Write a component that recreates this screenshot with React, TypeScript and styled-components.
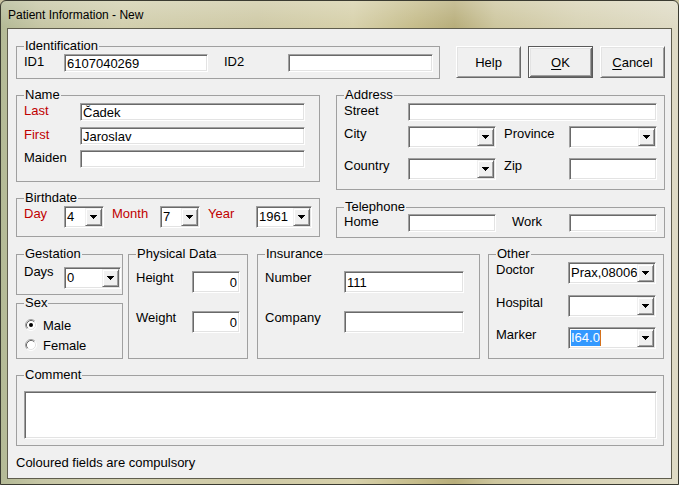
import React from "react";
import styled, { createGlobalStyle } from "styled-components";

const GlobalStyle = createGlobalStyle`
  html, body { margin: 0; padding: 0; background: #c9c3a0; }
  body {
    font-family: "Liberation Sans", Arial, sans-serif;
    font-size: 13px;
    color: #000;
  }
  * { box-sizing: border-box; }
`;

const Window = styled.div`
  width: 679px;
  height: 485px;
  border: 1px solid #3b3b31;
  border-radius: 6px 6px 0 0;
  overflow: hidden;
  background: linear-gradient(180deg, rgba(255, 255, 255, 0.22) 0, rgba(255, 255, 255, 0) 26px),
    linear-gradient(
      90deg,
      #b4ba96 0%,
      #c6c6a5 6%,
      #d2cfae 18%,
      #cfcaa6 38%,
      #d7d1ab 52%,
      #c6bd8c 61%,
      #b8ae7b 67%,
      #cdc69e 73%,
      #d8d3b5 85%,
      #dfdbc5 100%
    );
`;

const TitleBar = styled.div`
  height: 27px;
  padding-left: 7px;
  display: flex;
  align-items: center;
  font-size: 12px;
  color: #000;
`;

const Client = styled.div`
  margin: 0 6px;
  height: 451px;
  border: 1px solid #5f5d4d;
  background: #f0f0f0;
  padding: 10px 0 0 8px;
`;

const Line = styled.div<{ $mt?: number }>`
  display: flex;
  align-items: flex-start;
  margin-top: ${(p) => p.$mt ?? 0}px;
`;

const Column = styled.div<{ $w: number }>`
  display: flex;
  flex-direction: column;
  width: ${(p) => p.$w}px;
`;

const Group = styled.fieldset<{ $w: number; $h: number; $pt?: number; $ml?: number; $mt?: number }>`
  flex: none;
  width: ${(p) => p.$w}px;
  height: ${(p) => p.$h}px;
  min-width: 0;
  margin: ${(p) => p.$mt ?? 0}px 0 0 ${(p) => p.$ml ?? 0}px;
  padding: ${(p) => p.$pt ?? 1}px 0 0 7px;
  border: 1px solid #a0a0a0;
`;

const Legend = styled.legend`
  padding: 0 1px;
  margin: 0;
  line-height: 14px;
  font-size: 13px;
`;

const Row = styled.div<{ $h?: number; $mt?: number }>`
  display: flex;
  align-items: flex-start;
  height: ${(p) => p.$h ?? 22}px;
  margin-top: ${(p) => p.$mt ?? 0}px;
`;

const Label = styled.span<{ $w: number; $ml?: number; $dy?: number; $req?: boolean }>`
  flex: none;
  width: ${(p) => p.$w}px;
  margin-left: ${(p) => p.$ml ?? 0}px;
  margin-top: ${(p) => p.$dy ?? 0}px;
  line-height: 16px;
  white-space: nowrap;
  color: ${(p) => (p.$req ? "#c00000" : "#000")};
`;

const sunken = `
  border: 1px solid;
  border-color: #a0a0a0 #ffffff #ffffff #a0a0a0;
  box-shadow: inset 1px 1px 0 #696969, inset -1px -1px 0 #e3e3e3;
  background: #fff;
`;

const TextBox = styled.input<{ $w: number; $h?: number; $right?: boolean }>`
  flex: none;
  width: ${(p) => p.$w}px;
  height: ${(p) => p.$h ?? 18}px;
  margin: 0;
  padding: 0 ${(p) => (p.$right ? 2 : 0)}px 0 2px;
  ${sunken}
  font: 13px "Liberation Sans", Arial, sans-serif;
  color: #000;
  text-align: ${(p) => (p.$right ? "right" : "left")};
  outline: none;
`;

const Memo = styled.textarea`
  display: block;
  width: 633px;
  height: 48px;
  margin: 0;
  padding: 1px 2px;
  ${sunken}
  font: 13px "Liberation Sans", Arial, sans-serif;
  resize: none;
  outline: none;
`;

const ComboBox = styled.div<{ $w: number }>`
  flex: none;
  display: flex;
  width: ${(p) => p.$w}px;
  height: 22px;
  padding: 1px;
  ${sunken}
`;

const ComboText = styled.span`
  flex: 1;
  min-width: 0;
  overflow: hidden;
  white-space: nowrap;
  padding-left: 1px;
  line-height: 18px;
`;

const Selected = styled.span`
  display: inline-block;
  line-height: 16px;
  margin-top: 1px;
  background: #3399ff;
  color: #fff;
  border-right: 1px solid #d4711c;
`;

const DropButton = styled.span`
  flex: none;
  width: 17px;
  height: 18px;
  display: flex;
  align-items: center;
  justify-content: center;
  border: 1px solid;
  border-color: #f0f0f0 #696969 #696969 #f0f0f0;
  box-shadow: inset 1px 1px 0 #fff, inset -1px -1px 0 #a0a0a0;
  background: #f0f0f0;
`;

const Buttons = styled.div`
  display: flex;
  gap: 7px;
  margin: 7px 0 0 16px;
`;

const Button = styled.button<{ $default?: boolean }>`
  width: 65px;
  height: 32px;
  margin: 0;
  padding: 0;
  font: 13px "Liberation Sans", Arial, sans-serif;
  color: #000;
  background: #f0f0f0;
  border: 1px solid;
  border-color: ${(p) => (p.$default ? "#5a5a5a" : "#fff #696969 #696969 #fff")};
  box-shadow: ${(p) =>
    p.$default
      ? "inset 1px 1px 0 #fff, inset -1px -1px 0 #696969, inset 2px 2px 0 #e3e3e3, inset -2px -2px 0 #a0a0a0"
      : "inset 1px 1px 0 #e3e3e3, inset -1px -1px 0 #a0a0a0"};
  u { text-decoration: underline; text-underline-offset: 2px; }
`;

const RadioRow = styled.label`
  display: flex;
  align-items: center;
  height: 20px;
  padding-left: 1px;
  gap: 6px;
`;

const Footer = styled.div`
  margin-top: 9px;
  line-height: 16px;
`;

const Arrow = () => (
  <svg width="7" height="4" viewBox="0 0 7 4" shapeRendering="crispEdges">
    <path d="M0 0h7v1H0zM1 1h5v1H1zM2 2h3v1H2zM3 3h1v1H3z" fill="#000" />
  </svg>
);

const Combo = ({ w, children }: { w: number; children?: React.ReactNode }) => (
  <ComboBox $w={w}>
    <ComboText>{children}</ComboText>
    <DropButton>
      <Arrow />
    </DropButton>
  </ComboBox>
);

const Radio = ({ checked }: { checked?: boolean }) => (
  <svg width="12" height="12" viewBox="0 0 12 12">
    <circle cx="6" cy="6" r="5" fill="#fff" />
    <path d="M2.11 9.89A5.5 5.5 0 0 1 9.89 2.11" fill="none" stroke="#a0a0a0" />
    <path d="M9.89 2.11A5.5 5.5 0 0 1 2.11 9.89" fill="none" stroke="#ffffff" />
    <path d="M2.82 9.18A4.5 4.5 0 0 1 9.18 2.82" fill="none" stroke="#696969" />
    <path d="M9.18 2.82A4.5 4.5 0 0 1 2.82 9.18" fill="none" stroke="#e3e3e3" />
    {checked && <circle cx="6" cy="6" r="2" fill="#000" />}
  </svg>
);

export default function App() {
  return (
    <>
      <GlobalStyle />
      <Window>
        <TitleBar>Patient Information - New</TitleBar>
        <Client>
          <Line>
            <Group $w={424} $h={40}>
              <Legend>Identification</Legend>
              <Row $h={18}>
                <Label $w={40}>ID1</Label>
                <TextBox $w={144} defaultValue="6107040269" />
                <Label $w={64} $ml={16}>ID2</Label>
                <TextBox $w={145} />
              </Row>
            </Group>
            <Buttons>
              <Button>Help</Button>
              <Button $default>
                <u>O</u>K
              </Button>
              <Button>
                <u>C</u>ancel
              </Button>
            </Buttons>
          </Line>

          <Line $mt={9}>
            <Column $w={304}>
              <Group $w={304} $h={94}>
                <Legend>Name</Legend>
                <Row $h={18}>
                  <Label $w={56} $req>Last</Label>
                  <TextBox $w={225} defaultValue="Čadek" />
                </Row>
                <Row $h={18} $mt={6}>
                  <Label $w={56} $req>First</Label>
                  <TextBox $w={225} defaultValue="Jaroslav" />
                </Row>
                <Row $h={18} $mt={5}>
                  <Label $w={56}>Maiden</Label>
                  <TextBox $w={225} />
                </Row>
              </Group>
              <Group $w={304} $h={46} $mt={9}>
                <Legend>Birthdate</Legend>
                <Row>
                  <Label $w={40} $req>Day</Label>
                  <Combo w={40}>4</Combo>
                  <Label $w={48} $ml={8} $req>Month</Label>
                  <Combo w={40}>7</Combo>
                  <Label $w={48} $ml={8} $req>Year</Label>
                  <Combo w={56}>1961</Combo>
                </Row>
              </Group>
            </Column>
            <Column $w={329}>
              <Group $w={329} $h={102} $ml={16}>
                <Legend>Address</Legend>
                <Row $h={18}>
                  <Label $w={64}>Street</Label>
                  <TextBox $w={249} />
                </Row>
                <Row $mt={5}>
                  <Label $w={64}>City</Label>
                  <Combo w={88} />
                  <Label $w={65} $ml={8}>Province</Label>
                  <Combo w={88} />
                </Row>
                <Row $mt={10}>
                  <Label $w={64}>Country</Label>
                  <Combo w={88} />
                  <Label $w={65} $ml={8}>Zip</Label>
                  <TextBox $w={88} $h={22} />
                </Row>
              </Group>
              <Group $w={329} $h={38} $ml={16} $mt={10} $pt={0}>
                <Legend>Telephone</Legend>
                <Row $h={18}>
                  <Label $w={64}>Home</Label>
                  <TextBox $w={88} />
                  <Label $w={57} $ml={16}>Work</Label>
                  <TextBox $w={88} />
                </Row>
              </Group>
            </Column>
          </Line>

          <Line $mt={9}>
            <Column $w={107}>
              <Group $w={107} $h={48} $pt={6}>
                <Legend>Gestation</Legend>
                <Row>
                  <Label $w={40} $dy={-3}>Days</Label>
                  <Combo w={57}>0</Combo>
                </Row>
              </Group>
              <Group $w={107} $h={63} $mt={1} $pt={5}>
                <Legend>Sex</Legend>
                <RadioRow>
                  <Radio checked />
                  Male
                </RadioRow>
                <RadioRow>
                  <Radio />
                  Female
                </RadioRow>
              </Group>
            </Column>
            <Group $w={120} $h={112} $ml={5} $pt={10}>
              <Legend>Physical Data</Legend>
              <Row>
                <Label $w={56} $dy={-1}>Height</Label>
                <TextBox $w={48} $h={22} $right defaultValue="0" />
              </Row>
              <Row $mt={18}>
                <Label $w={56} $dy={-1}>Weight</Label>
                <TextBox $w={48} $h={22} $right defaultValue="0" />
              </Row>
            </Group>
            <Group $w={223} $h={112} $ml={9} $pt={10}>
              <Legend>Insurance</Legend>
              <Row>
                <Label $w={79} $dy={-1}>Number</Label>
                <TextBox $w={120} $h={22} defaultValue="111" />
              </Row>
              <Row $mt={18}>
                <Label $w={79} $dy={-1}>Company</Label>
                <TextBox $w={120} $h={22} />
              </Row>
            </Group>
            <Group $w={176} $h={112} $ml={8}>
              <Legend>Other</Legend>
              <Row>
                <Label $w={72}>Doctor</Label>
                <Combo w={88}>Prax,08006,</Combo>
              </Row>
              <Row $mt={11}>
                <Label $w={72}>Hospital</Label>
                <Combo w={88} />
              </Row>
              <Row $mt={10}>
                <Label $w={72}>Marker</Label>
                <Combo w={88}>
                  <Selected>I64.0</Selected>
                </Combo>
              </Row>
            </Group>
          </Line>

          <Group $w={648} $h={78} $mt={9} $pt={9}>
            <Legend>Comment</Legend>
            <Memo />
          </Group>

          <Footer>Coloured fields are compulsory</Footer>
        </Client>
      </Window>
    </>
  );
}
